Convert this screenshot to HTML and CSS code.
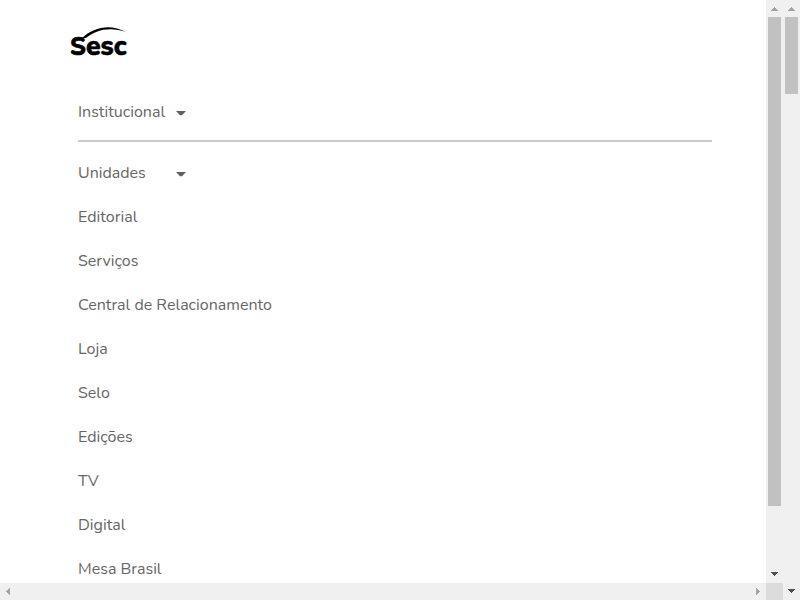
FILE: index.html
```html
<!DOCTYPE html>
<html lang="pt-BR">
<head>
<meta charset="utf-8">
<title>Sesc</title>
<link rel="stylesheet" href="styles.css">
</head>
<body>
<div class="window">
  <main class="panel">
    <a class="brand">
      <svg width="60" height="36" viewBox="0 0 60 36">
        <path d="M12 12C23 1.5 40-3 56 6C41 1 27 3 16 12Z"/>
        <text class="wordmark" x="0" y="28.5" textLength="56.5" lengthAdjust="spacingAndGlyphs"><tspan class="initial">S</tspan>esc</text>
      </svg>
    </a>
    <nav class="menu">
      <a class="item"><span class="label">Institucional</span><svg class="caret" width="10" height="5"><path d="M0 0H10L6 4.3H4Z"/></svg></a>
      <hr class="rule">
      <a class="item"><span class="label">Unidades</span><svg class="caret" width="10" height="5"><path d="M0 0H10L6 4.3H4Z"/></svg></a>
      <a class="item">Editorial</a>
      <a class="item">Serviços</a>
      <a class="item">Central de Relacionamento</a>
      <a class="item">Loja</a>
      <a class="item">Selo</a>
      <a class="item">Edições</a>
      <a class="item">TV</a>
      <a class="item">Digital</a>
      <a class="item">Mesa Brasil</a>
    </nav>
  </main>
  <div class="bar inner">
    <svg class="arrow faded" width="7" height="4"><path d="M3 0h1v1h1v1h1v1h1v1H0v-1h1v-1h1v-1h1z"/></svg>
    <div class="thumb"></div>
    <svg class="arrow end" width="7" height="4"><path d="M0 0h7v1h-1v1h-1v1h-1v1h-1v-1h-1v-1h-1v-1h-1z"/></svg>
  </div>
  <div class="bar outer">
    <svg class="arrow faded" width="7" height="4"><path d="M3 0h1v1h1v1h1v1h1v1H0v-1h1v-1h1v-1h1z"/></svg>
    <div class="thumb"></div>
    <svg class="arrow end" width="7" height="4"><path d="M0 0h7v1h-1v1h-1v1h-1v1h-1v-1h-1v-1h-1v-1h-1z"/></svg>
  </div>
  <div class="bar horizontal">
    <svg class="arrow faded" width="4" height="7"><path d="M4 0v7h-1v-1h-1v-1h-1v-1h-1v-1h1v-1h1v-1h1v-1z"/></svg>
    <svg class="arrow faded" width="4" height="7"><path d="M0 0v7h1v-1h1v-1h1v-1h1v-1h-1v-1h-1v-1h-1v-1z"/></svg>
  </div>
  <div class="corner"></div>
</div>
</body>
</html>
```
FILE: styles.css
```css
* { box-sizing: border-box; }
body { margin: 0; overflow: hidden; background: #fff; }
.window {
  display: grid;
  grid-template-columns: 766px 17px 17px;
  grid-template-rows: 583px 17px;
  height: 600px;
}
.panel { overflow: hidden; padding: 26px 54px 0 70px; }
.brand, .brand svg { display: block; height: 36px; overflow: visible; }
.wordmark { font: 800 27px Nunito, Lato, sans-serif; stroke: #000; stroke-width: .6px; }
.initial { font-size: 25px; }
.menu {
  padding: 28px 0 0 8px;
  color: #666;
  font: 16px/24px Nunito, Lato, sans-serif;
}
.item { display: flex; align-items: center; height: 44px; padding-bottom: 1px; }
.label { width: 98px; }
.caret { margin-top: 4px; fill: #606062; }
.rule { height: 2px; margin: 6px 0 9px; border: 0; background: #cbcbcb; }
.bar { display: flex; flex-direction: column; align-items: center; background: #f0f0f0; }
.inner { padding: 7px 0; }
.outer { grid-column: 3; grid-row: 1 / 3; padding: 7px 0; }
.horizontal { grid-row: 2; grid-column: 1; flex-direction: row; justify-content: space-between; padding: 0 6px; }
.corner { grid-row: 2; grid-column: 2; background: #dcdcdc; }
.thumb { width: 13px; margin-top: 6px; background: #c1c1c1; }
.inner .thumb { height: 489px; }
.outer .thumb { height: 77px; }
.arrow { flex: none; fill: #505050; shape-rendering: crispEdges; }
.faded { fill: #a3a3a3; }
.end { margin-top: auto; }
```
